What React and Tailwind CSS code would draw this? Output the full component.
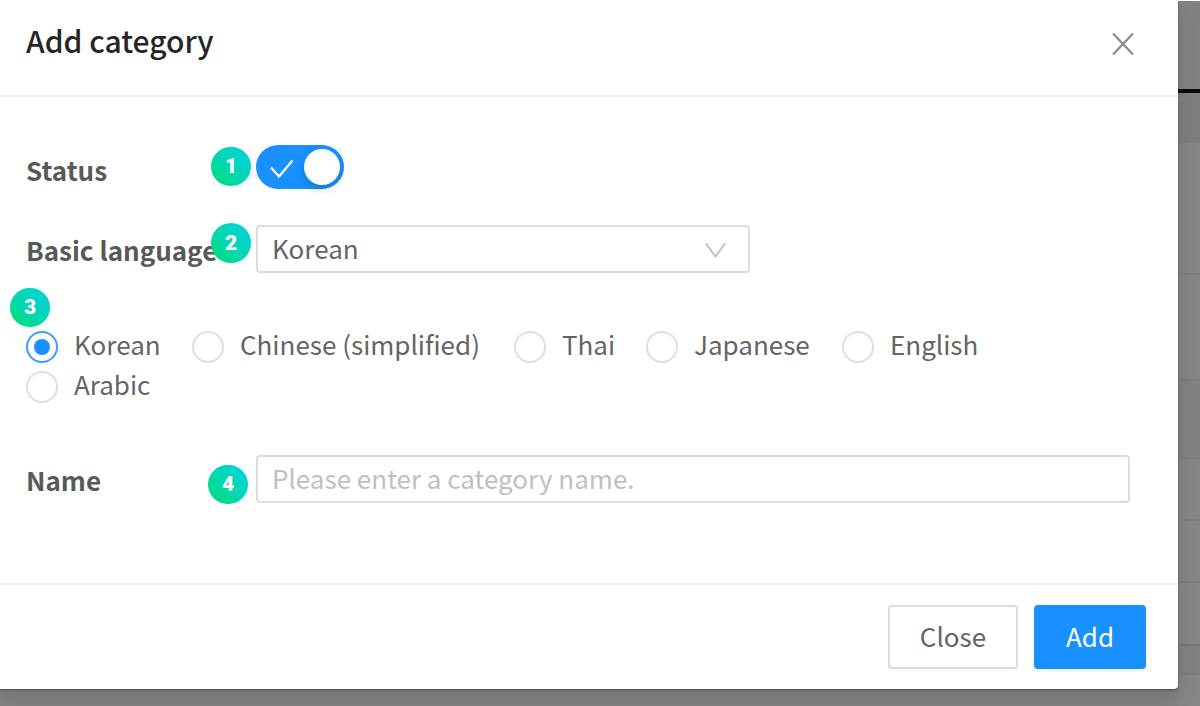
import React from "react";

const languages = [
  { name: "Korean", item: "w-[166px]", checked: true },
  { name: "Chinese (simplified)", item: "w-[322px]" },
  { name: "Thai", item: "w-[132px]" },
  { name: "Japanese", item: "w-[196px]" },
  { name: "English", item: "w-[150px]" },
  { name: "Arabic", item: "w-[150px]" },
];

function Badge({ n, place }) {
  return (
    <span
      className={`absolute z-10 flex w-10 items-center justify-center rounded-full bg-linear-to-tr from-[#00dc78] from-10% via-[#00d8ae] via-45% to-[#00d4cc] to-75% font-['Roboto',sans-serif] text-[21px] leading-none font-black text-white ${place}`}
    >
      {n}
    </span>
  );
}

function Radio({ name, item, checked }) {
  return (
    <label className={`flex h-10 items-center ${item}`}>
      <span
        className={`mt-[3px] flex size-8 shrink-0 items-center justify-center rounded-full border-2 bg-white ${
          checked ? "border-[#3a9dff]" : "border-[#dedede]"
        }`}
      >
        {checked && <span className="size-4 rounded-full bg-[#1890ff]" />}
      </span>
      <span className="pb-0.5 pl-4 leading-[38px] whitespace-nowrap">{name}</span>
    </label>
  );
}

function Backdrop() {
  return (
    <div className="flex h-full w-[22px] flex-col bg-[#868686]">
      <div className="h-[88px] bg-[#818283]" />
      <div className="h-1 bg-[#0a0a0a]" />
      <div className="h-[50px] bg-[#7e7f80]" />
      <div className="h-[132px] border-b-2 border-[#7e7e7e] bg-[#868686]" />
      <div className="h-[106px] border-b-2 border-[#7e7e7e]" />
      <div className="h-[78px] border-b-2 border-[#7e7e7e] bg-[#838383]" />
      <div className="h-[62px] border-b-2 border-[#7e7e7e]" />
      <div className="h-[62px] border-b-2 border-[#7e7e7e]" />
      <div className="h-[63px] border-b-2 border-[#777777]" />
      <div className="h-[29px] border-b-2 border-[#7e7e7e] bg-[#828282]" />
    </div>
  );
}

export default function App() {
  return (
    <div className="flex h-[706px] w-[1200px] items-start overflow-hidden border-t border-white bg-[#828282] font-['Noto_Sans_CJK_KR',sans-serif] text-[26px] text-[#646464]">
      <div className="relative flex h-[688px] w-[1178px] shrink-0 flex-col rounded-br-[4px] bg-white shadow-[0_1px_2px_rgba(0,0,0,0.4),0_8px_24px_rgba(0,0,0,0.12)]">
        <header className="flex h-24 items-center justify-between border-b-2 border-[#f0f0f0] pr-11 pb-2.5 pl-[26px]">
          <h1 className="pb-1.5 text-[30px] leading-10 font-medium text-[#262626]">Add category</h1>
          <svg className="mt-0.5 h-[22px] w-[22px]" viewBox="0 0 22 22" fill="none" stroke="#8c8c8c" strokeWidth="2.3">
            <path d="M1 .5 21 21.5M21 .5 1 21.5" />
          </svg>
        </header>

        <main className="h-[486px] pt-12 pl-[26px]">
          <div className="relative flex h-11 items-center">
            <span className="w-[230px] pt-1 font-bold text-[#595959]">Status</span>
            <Badge n="1" place="left-[185px] top-[2px] h-[39px]" />
            <span className="flex h-11 w-22 items-center justify-between rounded-full bg-[#1890ff] pr-[4px] pl-[14px]">
              <svg className="mt-1 h-5 w-6" viewBox="0 0 24 20" fill="none" stroke="white" strokeWidth="2.2">
                <path d="M1 8.5 9 17.5 22.5 1.5" />
              </svg>
              <span className="size-9 rounded-full bg-white shadow-[0_4px_8px_rgba(0,35,11,0.2)]" />
            </span>
          </div>

          <div className="relative mt-9 flex h-12 items-center">
            <span className="w-[230px] font-bold whitespace-nowrap text-[#595959]">Basic language</span>
            <Badge n="2" place="left-[185px] top-[-2px] h-10" />
            <div className="flex h-12 w-[494px] items-center justify-between rounded-[4px] border-2 border-[#dcdcdc] pr-[22px] pl-[14px]">
              <span className="pb-1">Korean</span>
              <svg className="mt-[3px] h-[15px] w-[21px]" viewBox="0 0 21 15" fill="none" stroke="#c0c0c0" strokeWidth="2">
                <path d="M1 .5 10.5 13.5 20 .5" />
              </svg>
            </div>
          </div>

          <div className="relative mt-[52px] flex flex-wrap pr-[100px]">
            <Badge n="3" place="-left-4 top-[-37px] h-[39px]" />
            {languages.map((l) => (
              <Radio key={l.name} {...l} />
            ))}
          </div>

          <div className="relative mt-[50px] flex h-12 items-center">
            <span className="w-[230px] font-bold text-[#595959]">Name</span>
            <Badge n="4" place="left-[182px] top-[10px] h-[39px]" />
            <div className="flex h-12 w-[874px] items-center rounded-[4px] border-2 border-[#dcdcdc] pb-1 pl-[14px] text-[#c0c0c0]">
              Please enter a category name.
            </div>
          </div>
        </main>

        <footer className="flex grow items-start justify-end gap-4 border-t-2 border-[#f0f0f0] pt-5 pr-8">
          <button className="h-16 w-[130px] rounded-[4px] border-2 border-[#dcdcdc] bg-white pb-1 shadow-[0_3px_0_rgba(0,0,0,0.016)]">
            Close
          </button>
          <button className="h-16 w-28 rounded-[4px] bg-[#1890ff] pb-1 text-white shadow-[0_3px_0_rgba(0,0,0,0.04)]">
            Add
          </button>
        </footer>
      </div>
      <Backdrop />
    </div>
  );
}
